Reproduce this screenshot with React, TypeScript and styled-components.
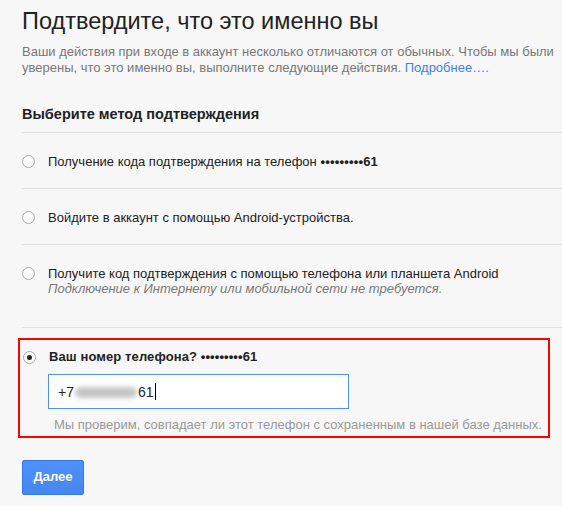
import styled, { createGlobalStyle } from "styled-components";

const GlobalStyle = createGlobalStyle`
  html, body {
    margin: 0;
    padding: 0;
    background: #f7f7f7;
    overflow: hidden;
  }
  body {
    font-family: "Liberation Sans", Arial, sans-serif;
    color: #222;
  }
`;

const Page = styled.main`
  width: 580px;
  padding: 6px 0 0 22px;
`;

const Title = styled.h1`
  margin: 0;
  font-size: 23.5px;
  line-height: 30px;
  font-weight: normal;
  color: #222;
`;

const Intro = styled.p`
  margin: 8px 0 0;
  width: 545px;
  font-size: 13px;
  line-height: 16px;
  color: #777;
`;

const Link = styled.a`
  color: #427fed;
  text-decoration: none;
`;

const SectionTitle = styled.h2`
  margin: 29px 0 0;
  padding-bottom: 9px;
  font-size: 14.5px;
  line-height: 18px;
  font-weight: bold;
  color: #222;
`;

const Methods = styled.ul`
  margin: 0;
  padding: 0;
  list-style: none;
  border-bottom: 1px solid #e0e0e0;
`;

const Method = styled.li<{ $extra?: boolean }>`
  display: flex;
  align-items: flex-start;
  gap: 13px;
  padding: 21px 0 ${(p) => (p.$extra ? "31px" : "19px")};
  border-top: 1px solid #e0e0e0;
  font-size: 13px;
  line-height: 15px;
  color: #222;
`;

const Radio = styled.span<{ $checked?: boolean }>`
  flex: none;
  position: relative;
  width: 11px;
  height: 11px;
  margin-top: ${(p) => (p.$checked ? "0" : "1px")};
  border: 1px solid #a8a8a8;
  border-radius: 50%;
  background: #fff;
  &::after {
    content: "";
    display: ${(p) => (p.$checked ? "block" : "none")};
    position: absolute;
    left: 3px;
    top: 3px;
    width: 5px;
    height: 5px;
    border-radius: 50%;
    background: #222;
  }
`;

const LabelText = styled.div`
  display: flex;
  flex-direction: column;
`;

const Note = styled.span`
  font-style: italic;
  color: #777;
`;

const Masked = styled.b`
  font-weight: bold;
  letter-spacing: 0.2px;
`;

const Selected = styled.section`
  margin: 10px 52px 0 -4px;
  padding: 8px 0 2px 3px;
  border: 2px solid #f00;
`;

const SelectedHead = styled.div`
  display: flex;
  align-items: center;
  gap: 13px;
  font-size: 13px;
  line-height: 18px;
  font-weight: bold;
  color: #222;
  letter-spacing: 0.1px;
`;

const PhoneField = styled.div`
  display: flex;
  align-items: center;
  box-sizing: border-box;
  width: 301px;
  height: 35px;
  margin: 8px 0 0 25px;
  padding: 0 9px;
  border: 1px solid #4d90fe;
  background: #fff;
  font-size: 14px;
  color: #222;
`;

/* redacted digits: a soft grey smudge */
const Smudge = styled.span`
  display: inline-block;
  width: 62px;
  height: 11px;
  margin: 1px 1px 0;
  border-radius: 6px;
  background: #c4c4c4;
  filter: blur(2.5px);
`;

const Caret = styled.span`
  display: inline-block;
  width: 1px;
  height: 17px;
  margin-left: 1px;
  background: #000;
`;

const Hint = styled.p`
  margin: 7px 0 0 31px;
  font-size: 13px;
  line-height: 18px;
  color: #999;
`;

const NextButton = styled.button`
  margin-top: 22px;
  width: 62px;
  height: 35px;
  padding: 0 0 2px;
  border: 1px solid #3079ed;
  border-radius: 2px;
  background: linear-gradient(#4d90fe, #4787ed);
  color: #fff;
  font-family: inherit;
  font-size: 13px;
  font-weight: bold;
  text-shadow: 0 1px rgba(0, 0, 0, 0.1);
`;

export default function App() {
  return (
    <>
      <GlobalStyle />
      <Page>
        <Title>Подтвердите, что это именно вы</Title>
        <Intro>
          Ваши действия при входе в аккаунт несколько отличаются от обычных.
          Чтобы мы были уверены, что это именно вы, выполните следующие
          действия. <Link href="#">Подробнее….</Link>
        </Intro>

        <SectionTitle>Выберите метод подтверждения</SectionTitle>
        <Methods>
          <Method>
            <Radio />
            <span>
              Получение кода подтверждения на телефон <Masked>•••••••••61</Masked>
            </span>
          </Method>
          <Method>
            <Radio />
            <span>Войдите в аккаунт с помощью Android-устройства.</span>
          </Method>
          <Method $extra>
            <Radio />
            <LabelText>
              <span>Получите код подтверждения с помощью телефона или планшета Android</span>
              <Note>Подключение к Интернету или мобильной сети не требуется.</Note>
            </LabelText>
          </Method>
        </Methods>

        <Selected>
          <SelectedHead>
            <Radio $checked />
            <span>Ваш номер телефона? •••••••••61</span>
          </SelectedHead>
          <PhoneField>
            <span>+7</span>
            <Smudge aria-hidden />
            <span>61</span>
            <Caret />
          </PhoneField>
          <Hint>Мы проверим, совпадает ли этот телефон с сохраненным в нашей базе данных.</Hint>
        </Selected>

        <NextButton type="button">Далее</NextButton>
      </Page>
    </>
  );
}
